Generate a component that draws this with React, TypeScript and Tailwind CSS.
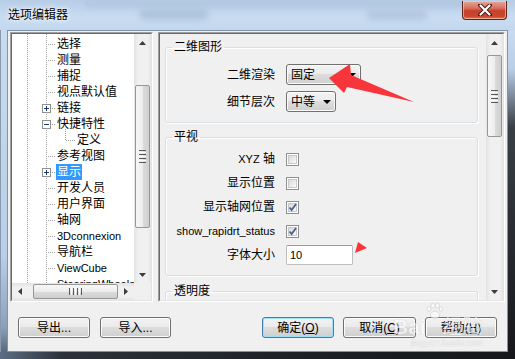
import React from "react";

type Item = { t: string; level?: number; box?: "plus" | "minus"; sel?: boolean; latin?: boolean };

const items: Item[] = [
  { t: "选择" },
  { t: "测量" },
  { t: "捕捉" },
  { t: "视点默认值" },
  { t: "链接", box: "plus" },
  { t: "快捷特性", box: "minus" },
  { t: "定义", level: 2 },
  { t: "参考视图" },
  { t: "显示", box: "plus", sel: true },
  { t: "开发人员" },
  { t: "用户界面" },
  { t: "轴网" },
  { t: "3Dconnexion", latin: true },
  { t: "导航栏" },
  { t: "ViewCube", latin: true },
  { t: "SteeringWheels", latin: true },
];

function UpArrow() {
  return (
    <svg width="7" height="4" viewBox="0 0 7 4">
      <path d="M0 4L3.5 0L7 4Z" fill="#3c3c3c" />
    </svg>
  );
}
function DownArrow() {
  return (
    <svg width="7" height="4" viewBox="0 0 7 4">
      <path d="M0 0L7 0L3.5 4Z" fill="#3c3c3c" />
    </svg>
  );
}
function LeftArrow() {
  return (
    <svg width="4" height="7" viewBox="0 0 4 7">
      <path d="M4 0L4 7L0 3.5Z" fill="#3c3c3c" />
    </svg>
  );
}
function RightArrow() {
  return (
    <svg width="4" height="7" viewBox="0 0 4 7">
      <path d="M0 0L4 3.5L0 7Z" fill="#3c3c3c" />
    </svg>
  );
}

function VScroll({ thumb }: { thumb: string }) {
  return (
    <div className="w-[17px] h-full shrink-0 flex flex-col bg-[linear-gradient(90deg,#e2e2e2,#f0f0f0_25%,#f0f0f0_80%,#e6e6e6)]">
      <div className="h-[17px] shrink-0 flex items-center justify-center">
        <UpArrow />
      </div>
      <div className="flex-1 flex flex-col items-center">
        <div
          className={`w-[15px] ${thumb} rounded-[2px] border border-[#979797] bg-[linear-gradient(90deg,#f7f7f7,#ededed_50%,#dcdcdc_51%,#cfcfcf)] flex flex-col items-center justify-center gap-[1px]`}
        >
          <div className="w-[7px] h-[1px] bg-[#5a5a5a]" />
          <div className="w-[7px] h-[1px] bg-[#fbfbfb]" />
          <div className="w-[7px] h-[1px] bg-[#5a5a5a]" />
          <div className="w-[7px] h-[1px] bg-[#fbfbfb]" />
          <div className="w-[7px] h-[1px] bg-[#5a5a5a]" />
          <div className="w-[7px] h-[1px] bg-[#fbfbfb]" />
          <div className="w-[7px] h-[1px] bg-[#5a5a5a]" />
        </div>
      </div>
      <div className="h-[17px] shrink-0 flex items-center justify-center">
        <DownArrow />
      </div>
    </div>
  );
}

function HScroll() {
  return (
    <div className="w-[122px] h-[17px] flex bg-[linear-gradient(180deg,#e2e2e2,#f0f0f0_25%,#f0f0f0_80%,#e6e6e6)]">
      <div className="w-[16px] flex items-center justify-center">
        <LeftArrow />
      </div>
      <div className="flex-1 flex items-center">
        <div className="ml-[5px] w-[85px] h-[15px] rounded-[2px] border border-[#979797] bg-[linear-gradient(180deg,#f7f7f7,#ededed_50%,#dcdcdc_51%,#cfcfcf)] flex items-center justify-center gap-[1px]">
          <div className="w-[1px] h-[7px] bg-[#5a5a5a]" />
          <div className="w-[1px] h-[7px] bg-[#fbfbfb]" />
          <div className="w-[1px] h-[7px] bg-[#5a5a5a]" />
          <div className="w-[1px] h-[7px] bg-[#fbfbfb]" />
          <div className="w-[1px] h-[7px] bg-[#5a5a5a]" />
          <div className="w-[1px] h-[7px] bg-[#fbfbfb]" />
          <div className="w-[1px] h-[7px] bg-[#5a5a5a]" />
        </div>
      </div>
      <div className="w-[16px] flex items-center justify-center">
        <RightArrow />
      </div>
    </div>
  );
}

function TreeLines() {
  const dot = "#a0a0a0";
  const els: React.ReactNode[] = [];
  items.forEach((it, i) => {
    const c = 10.5 + 16 * i;
    if (it.level === 2) {
      els.push(<line key={"h" + i} x1={54} y1={c} x2={63} y2={c} stroke={dot} strokeDasharray="1 1" />);
    } else {
      els.push(
        <line key={"h" + i} x1={it.box ? 40 : 36} y1={c} x2={44} y2={c} stroke={dot} strokeDasharray="1 1" />
      );
    }
  });
  const boxes = items
    .map((it, i) => ({ it, i }))
    .filter((x) => x.it.box)
    .map(({ it, i }) => {
      const c = 10 + 16 * i;
      return (
        <g key={"b" + i}>
          <rect x={30.5} y={c - 4 + 0.5} width={8} height={8} fill="#ffffff" stroke="#919191" />
          <line x1={32} y1={c + 0.5} x2={37} y2={c + 0.5} stroke="#1f3a7a" />
          {it.box === "plus" && <line x1={34.5} y1={c - 2} x2={34.5} y2={c + 3} stroke="#1f3a7a" />}
        </g>
      );
    });
  return (
    <svg className="absolute left-0 top-0" width="122" height="249" viewBox="0 0 122 249">
      <line x1={15.5} y1={0} x2={15.5} y2={249} stroke={dot} strokeDasharray="1 1" />
      <line x1={34.5} y1={0} x2={34.5} y2={249} stroke={dot} strokeDasharray="1 1" />
      <line x1={53.5} y1={95} x2={53.5} y2={106.5} stroke={dot} strokeDasharray="1 1" />
      {els}
      {boxes}
    </svg>
  );
}

function Check({ checked }: { checked?: boolean }) {
  return (
    <div className="relative w-[13px] h-[13px] border border-[#8e8f8f] bg-white p-[1px]">
      <div className="w-full h-full border border-[#c9c9c9] bg-[linear-gradient(135deg,#d9d9d9,#f9f9f9)]" />
      {checked && (
        <svg className="absolute left-0 top-0" width="11" height="11" viewBox="0 0 11 11">
          <path d="M2.5 5.5L4.6 8L9 2" stroke="#4a5c96" strokeWidth="1.8" fill="none" />
        </svg>
      )}
    </div>
  );
}

function Combo({ text, w }: { text: string; w: string }) {
  return (
    <div
      className={`${w} h-[21px] rounded-[3px] border border-[#707070] bg-[linear-gradient(180deg,#f3f3f3,#ebebeb_45%,#dddddd_50%,#cfcfcf)] shadow-[inset_0_0_0_1px_#fbfbfb] flex items-center pl-[4px] pr-[4px] text-[12px] leading-[16px]`}
    >
      <span className="flex-1">{text}</span>
      <svg width="8" height="4" viewBox="0 0 8 4">
        <path d="M0 0L8 0L4 4Z" fill="#000" />
      </svg>
    </div>
  );
}

function Btn({ children, w, focused }: { children: React.ReactNode; w: string; focused?: boolean }) {
  return (
    <div
      className={`${w} h-[21px] rounded-[3px] border flex items-center justify-center text-[12px] leading-[16px] text-black bg-[linear-gradient(180deg,#f2f2f2,#ebebeb_45%,#dddddd_50%,#cfcfcf)] ${
        focused ? "border-[#3c7fb1] shadow-[inset_0_0_0_1px_#9ee0f7]" : "border-[#707070] shadow-[inset_0_0_0_1px_#fbfbfb]"
      }`}
    >
      {children}
    </div>
  );
}

function Row({ label, h, children, latin }: { label: React.ReactNode; h: string; children: React.ReactNode; latin?: boolean }) {
  return (
    <div className={`flex items-center ${h} gap-[11px]`}>
      <div className={`w-[109px] text-right whitespace-nowrap leading-[16px] ${latin ? "text-[11px]" : "text-[12px]"}`}>
        {label}
      </div>
      {children}
    </div>
  );
}

export default function App() {
  return (
    <div className="font-[family-name:'Liberation_Sans','Noto_Sans_CJK_SC',sans-serif] w-[515px] h-[359px] overflow-hidden relative flex flex-col bg-[linear-gradient(180deg,#bcd2ea,#c8dbf0_10%,#bcd1e8_60%,#8fa3ba_90%,#4b5664)] text-black">
      {/* title bar */}
      <div className="relative h-[30px] shrink-0 flex items-center bg-[linear-gradient(180deg,#b7cde6,#c9dcf1_60%,#c3d7ee)]">
        <div className="absolute left-[140px] top-[9px] w-[68px] h-[11px] rounded-[4px] bg-[#9fb5cf] opacity-60 blur-[3px]" />
        <div className="absolute left-[367px] top-[10px] w-[60px] h-[10px] rounded-[4px] bg-[#a6bbd3] opacity-60 blur-[3px]" />
        <div className="absolute left-[85px] top-0 w-[380px] h-[8px] bg-[#adc4de] opacity-60 blur-[2px]" />
        <span className="relative ml-[8px] text-[12px] leading-[16px] [text-shadow:0_0_6px_#ffffff,0_0_3px_#ffffff]">选项编辑器</span>
        <div className="relative ml-auto mr-[8px] self-start mt-[1px] w-[45px] h-[19px] rounded-b-[4px] border border-[#5e2219] border-t-0 bg-[linear-gradient(180deg,#e7a899,#d6705c_40%,#c7402b_55%,#c8472f_85%,#e07a52)] shadow-[inset_0_0_0_1px_rgba(255,220,210,0.55)] flex items-center justify-center">
          <svg width="14" height="12" viewBox="0 0 14 12">
            <path d="M2 1L12 11M12 1L2 11" stroke="#4a1a12" strokeWidth="4" strokeLinecap="round" />
            <path d="M2.5 1.5L11.5 10.5M11.5 1.5L2.5 10.5" stroke="#ffffff" strokeWidth="2.2" strokeLinecap="round" />
          </svg>
        </div>
      </div>

      {/* middle */}
      <div className="flex h-[322px] shrink-0">
        <div className="w-[7px] bg-[linear-gradient(180deg,#c8dbf0,#b9cfe7_70%,#8da2ba_92%,#5a687a)] border-l border-[#8a9bb0]" />
        <div className="w-[501px] h-[322px] border border-[#7f93aa] bg-[#f0f0f0] flex flex-col">
          <div className="flex mt-[1px] ml-[2px] gap-[5px]">
            {/* tree panel */}
            <div className="w-[143px] h-[270px] border border-t-[#a0a0a0] border-l-[#a0a0a0] border-r-white border-b-white">
              <div className="w-full h-full border border-t-[#696969] border-l-[#696969] border-r-[#e3e3e3] border-b-[#e3e3e3] bg-white flex flex-col">
                <div className="flex h-[249px]">
                  <div className="relative flex-1 overflow-hidden">
                    <TreeLines />
                    <div className="relative flex flex-col pt-[2px]">
                      {items.map((it) => (
                        <div key={it.t} className={`h-[16px] shrink-0 flex items-center ${it.level === 2 ? "pl-[64px]" : "pl-[44px]"}`}>
                          <span
                            className={`px-[1px] h-[16px] flex items-center whitespace-nowrap ${
                              it.sel ? "bg-[#3399ff] text-white" : "text-black"
                            } ${it.latin ? "text-[11px]" : "text-[12px]"}`}
                          >
                            {it.t}
                          </span>
                        </div>
                      ))}
                    </div>
                  </div>
                  <VScroll thumb="mt-[34px] h-[143px]" />
                </div>
                <div className="flex h-[17px]">
                  <HScroll />
                  <div className="w-[17px] bg-[#f0f0f0]" />
                </div>
              </div>
            </div>

            {/* right panel */}
            <div className="w-[347px] h-[270px] border border-t-[#a0a0a0] border-l-[#a0a0a0] border-r-white border-b-white">
              <div className="w-full h-full border border-t-[#696969] border-l-[#696969] border-r-[#e3e3e3] border-b-[#e3e3e3] bg-[#f0f0f0] flex">
                <div className="flex-1 overflow-hidden pl-[5px] pr-[8px] pt-[5px] flex flex-col">
                  <fieldset className="border border-[#d5dfe5] rounded-[3px] shadow-[inset_1px_1px_0_#ffffff,1px_1px_0_#ffffff] pt-[9px] pb-[10px] flex flex-col gap-[6px]">
                    <legend className="ml-[6px] px-[2px] text-[12px] leading-[16px]">二维图形</legend>
                    <Row label="二维渲染" h="h-[21px]">
                      <Combo text="固定" w="w-[75px]" />
                    </Row>
                    <Row label="细节层次" h="h-[21px]">
                      <Combo text="中等" w="w-[50px]" />
                    </Row>
                  </fieldset>

                  <fieldset className="mt-[6px] border border-[#d5dfe5] rounded-[3px] shadow-[inset_1px_1px_0_#ffffff,1px_1px_0_#ffffff] pt-[2px] pb-[8px] flex flex-col">
                    <legend className="ml-[6px] px-[2px] text-[12px] leading-[16px]">平视</legend>
                    <Row
                      label={
                        <span>
                          <span className="text-[11px]">XYZ</span> 轴
                        </span>
                      }
                      h="h-[24px]"
                    >
                      <Check />
                    </Row>
                    <Row label="显示位置" h="h-[24px]">
                      <Check />
                    </Row>
                    <Row label="显示轴网位置" h="h-[24px]">
                      <Check checked />
                    </Row>
                    <Row label="show_rapidrt_status" h="h-[24px]" latin>
                      <Check checked />
                    </Row>
                    <Row label="字体大小" h="h-[24px]">
                      <div className="w-[67px] h-[20px] rounded-[2px] border border-[#bdbdbd] border-t-[#9a9a9a] bg-white flex items-center pl-[3px] text-[11px]">
                        10
                      </div>
                    </Row>
                  </fieldset>

                  <fieldset className="mt-[7px] border border-[#d5dfe5] rounded-[3px] shadow-[inset_1px_1px_0_#ffffff,1px_1px_0_#ffffff] h-[40px] shrink-0">
                    <legend className="ml-[6px] px-[2px] text-[12px] leading-[16px]">透明度</legend>
                  </fieldset>
                </div>
                <VScroll thumb="mt-[4px] h-[82px]" />
              </div>
            </div>
          </div>

          {/* buttons */}
          <div className="flex items-center mt-[15px] px-[10px]">
            <div className="flex gap-[10px]">
              <Btn w="w-[72px]">导出...</Btn>
              <Btn w="w-[71px]">导入...</Btn>
            </div>
            <div className="ml-auto flex gap-[9px]">
              <Btn w="w-[72px]" focused>
                确定(<span className="underline">O</span>)
              </Btn>
              <Btn w="w-[73px]">
                取消(<span className="underline">C</span>)
              </Btn>
              <Btn w="w-[72px]">
                帮助(<span className="underline">H</span>)
              </Btn>
            </div>
          </div>
        </div>
        <div className="w-[7px] bg-[linear-gradient(180deg,#c8dbf0,#b9cfe7_12%,#3a3f47_30%,#16181b)]" />
      </div>

      {/* bottom frame */}
      <div className="h-[7px] shrink-0 bg-[linear-gradient(90deg,#5d6e84,#2c323a_12%,#1d2024_60%,#15171a)]" />

      {/* annotations */}
      <svg className="absolute left-0 top-0 pointer-events-none" width="515" height="359" viewBox="0 0 515 359">
        <polygon points="329,78 350,64 351,75 414,102 347,87 344,93" fill="#f8353a" />
        <polygon points="355,253 358,242 367,248" fill="#f8353a" />
      </svg>

      {/* watermark */}
      <div className="absolute left-[393px] top-[302px] pointer-events-none flex flex-col items-start opacity-60">
        <div className="flex items-end">
          <span className="text-[21px] leading-[22px] font-bold text-white [text-shadow:0_0_1px_#8a8a8a] mt-[14px]">Bai</span>
          <svg width="18" height="18" viewBox="0 0 18 18" className="mb-[18px] -ml-[1px]">
            <ellipse cx="4" cy="7" rx="2" ry="2.6" fill="#ffffff" stroke="#b0b0b0" strokeWidth="0.6" />
            <ellipse cx="8" cy="3.5" rx="2" ry="2.6" fill="#ffffff" stroke="#b0b0b0" strokeWidth="0.6" />
            <ellipse cx="12.5" cy="3.5" rx="2" ry="2.6" fill="#ffffff" stroke="#b0b0b0" strokeWidth="0.6" />
            <ellipse cx="16" cy="7" rx="1.8" ry="2.4" fill="#ffffff" stroke="#b0b0b0" strokeWidth="0.6" />
            <ellipse cx="10" cy="13" rx="4.5" ry="3.8" fill="#ffffff" stroke="#b0b0b0" strokeWidth="0.6" />
          </svg>
          <span className="text-[20px] leading-[22px] text-white [text-shadow:0_0_1px_#8a8a8a]">经验</span>
        </div>
        <span className="ml-[18px] text-[9px] leading-[10px] text-white [text-shadow:0_0_1px_#8a8a8a]">jingyan.baidu.com</span>
      </div>
    </div>
  );
}
